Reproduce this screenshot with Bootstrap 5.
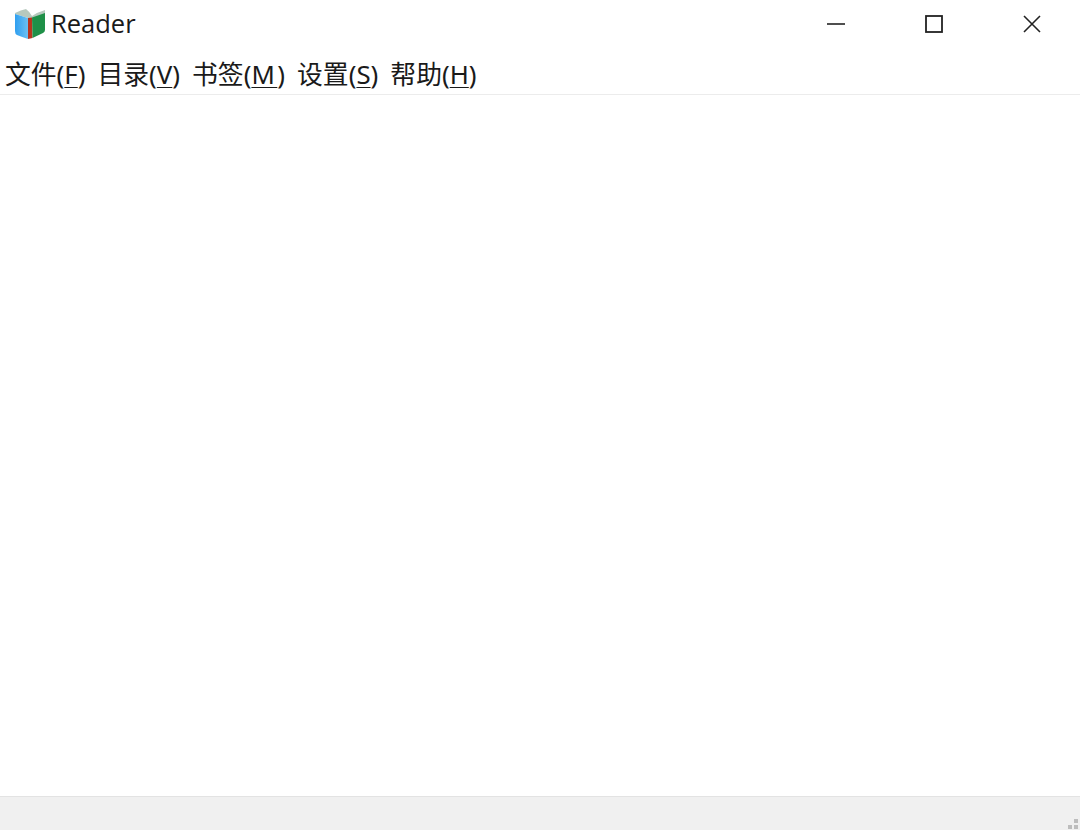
<!DOCTYPE html>
<html lang="zh">
<head>
<meta charset="utf-8">
<title>Reader</title>
<link href="https://cdn.jsdelivr.net/npm/bootstrap@5.3.0/dist/css/bootstrap.min.css" rel="stylesheet">
<style>
html,body{height:100%;}
body{background:#fff;color:#1a1a1a;font-family:"Noto Sans","Noto Sans CJK SC",sans-serif;overflow:hidden;}
.app-win{height:830px;}
.title-bar{height:47px;padding-left:14px;}
.app-title{font-size:25.5px;line-height:1;margin-left:5px;font-family:"Open Sans","Noto Sans",sans-serif;}
.win-btn{width:98px;height:47px;border:0;background:none;padding:0;}
.win-ctrls{margin-right:-1px;}
.menu-bar{height:48px;padding:8px 0 0 5px;gap:12px;border-bottom:1px solid #ececec;}
.menu-entry{font-size:25.8px;line-height:1;color:#1a1a1a;font-family:"Noto Sans","Noto Sans CJK SC",sans-serif;}
.menu-entry u{text-underline-offset:3px;text-decoration-thickness:1px;}
.menu-entry u.key-wide{letter-spacing:2.5px;}
.status-bar{height:34px;background:#f0f0f0;border-top:1px solid #e3e3e3;}
.grip{width:12px;height:12px;margin:0 1px 0 0;}
</style>
</head>
<body>
<div class="app-win d-flex flex-column">
  <div class="title-bar d-flex align-items-center">
    <svg width="32" height="32" viewBox="0 0 32 32" aria-hidden="true">
      <defs>
        <linearGradient id="pageBlue" x1="0" y1="0" x2="1" y2="0">
          <stop offset="0" stop-color="#2f9ff0"/>
          <stop offset="1" stop-color="#6cc0f2"/>
        </linearGradient>
      </defs>
      <path d="M1 5 Q7 2 12 1 Q16 4 18 8 Q24 4 31 2 L31 6 L18 10 L14 10 L1 6 Z" fill="#b7c9be"/>
      <path d="M1 6 L14 10 L14 31 Q8 29 3 27 Q1 26 1 23 Z" fill="url(#pageBlue)"/>
      <path d="M14 10 L18 9.500 L18.500 30 L14 31 Z" fill="#b8351f"/>
      <path d="M18 9.500 L31 5 L31 22 Q31 24 29 25 L18.500 30 Z" fill="#1f9048"/>
    </svg>
    <span class="app-title">Reader</span>
    <div class="ms-auto d-flex win-ctrls">
      <button class="win-btn d-flex align-items-center justify-content-center" aria-label="最小化">
        <svg width="20" height="18" viewBox="0 0 20 18"><path d="M1 9H19" stroke="#222" stroke-width="1.6"/></svg>
      </button>
      <button class="win-btn d-flex align-items-center justify-content-center" aria-label="最大化">
        <svg width="18" height="18" viewBox="0 0 18 18"><rect x="1" y="1" width="16" height="16" fill="none" stroke="#222" stroke-width="1.8"/></svg>
      </button>
      <button class="win-btn d-flex align-items-center justify-content-center" aria-label="关闭">
        <svg width="18" height="18" viewBox="0 0 18 18"><path d="M1 1L17 17M17 1L1 17" stroke="#222" stroke-width="1.6"/></svg>
      </button>
    </div>
  </div>
  <nav class="menu-bar d-flex align-items-center">
    <span class="menu-entry">文件(<u>F</u>)</span>
    <span class="menu-entry">目录(<u>V</u>)</span>
    <span class="menu-entry">书签(<u class="key-wide">M</u>)</span>
    <span class="menu-entry">设置(<u>S</u>)</span>
    <span class="menu-entry">帮助(<u>H</u>)</span>
  </nav>
  <main class="flex-grow-1"></main>
  <footer class="status-bar d-flex justify-content-end align-items-end">
    <svg class="grip" viewBox="0 0 12 12" aria-hidden="true">
      <rect x="7" y="1" width="4" height="4" fill="#bdbdbd"/>
      <rect x="1" y="7" width="4" height="4" fill="#bdbdbd"/>
      <rect x="7" y="7" width="4" height="4" fill="#bdbdbd"/>
    </svg>
  </footer>
</div>
<script src="https://cdn.jsdelivr.net/npm/bootstrap@5.3.0/dist/js/bootstrap.bundle.min.js"></script>
</body>
</html>
